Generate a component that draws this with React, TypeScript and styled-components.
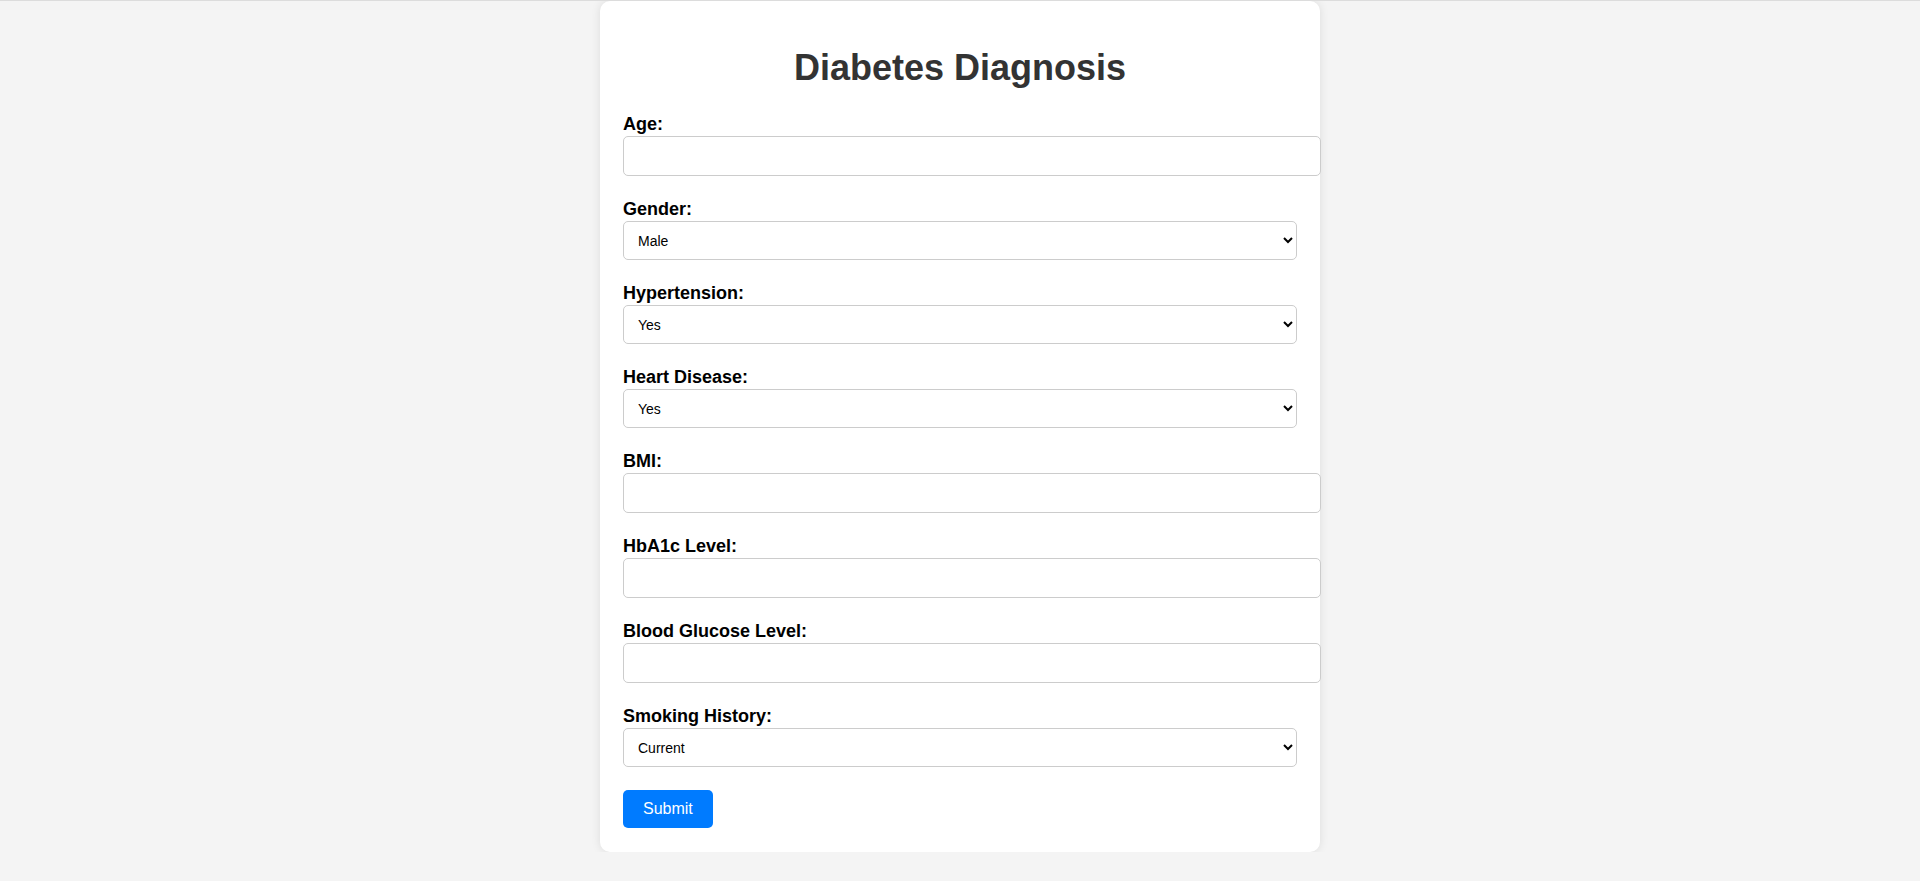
import styled, { createGlobalStyle } from 'styled-components';

const GlobalStyle = createGlobalStyle`
    body {
        margin: 0;
        background: #f4f4f4;
        border-top: 1px solid #dcdcdc;
        font-family: "Liberation Sans", Arial, sans-serif;
    }
`;

const Card = styled.div`
    width: 674px;
    margin: 0 auto;
    padding: 20px 23px 24px;
    background: #fff;
    border-radius: 10px;
    box-shadow: 0 0 10px rgba(0, 0, 0, 0.1);
`;

const Title = styled.h1`
    margin: 26px 0 25px;
    text-align: center;
    font-size: 36px;
    font-weight: 700;
    color: #333;
`;

const Field = styled.div`
    margin-bottom: 23px;
`;

const Label = styled.label`
    display: block;
    font-size: 18px;
    line-height: 20px;
    font-weight: 700;
    color: #000;
    margin-bottom: 2px;
`;

const TextInput = styled.input`
    display: block;
    box-sizing: content-box;
    width: 100%;
    height: 18px;
    padding: 10px 11px;
    border: 1px solid #ccc;
    border-radius: 5px;
    font-family: inherit;
    font-size: 16px;
    margin: 0;
`;

const Select = styled.select`
    display: block;
    box-sizing: border-box;
    width: 100%;
    height: 39px;
    padding: 0 10px;
    border: 1px solid #ccc;
    border-radius: 5px;
    background: #fff;
    color: #000;
    font-family: inherit;
    font-size: 14px;
    margin: 0;
`;

const SubmitButton = styled.button`
    display: block;
    padding: 10px 20px;
    border: none;
    border-radius: 5px;
    background: #007bff;
    color: #fff;
    font-family: inherit;
    font-size: 16px;
    line-height: 18px;
    cursor: pointer;
`;

type Option = { value: string; label: string };

const yesNo: Option[] = [
    { value: '1', label: 'Yes' },
    { value: '0', label: 'No' },
];

const selects: Record<string, Option[]> = {
    gender: [
        { value: 'male', label: 'Male' },
        { value: 'female', label: 'Female' },
    ],
    hypertension: yesNo,
    heart_disease: yesNo,
    smoking_history: [
        { value: 'current', label: 'Current' },
        { value: 'former', label: 'Former' },
        { value: 'never', label: 'Never' },
    ],
};

const fields: { id: string; label: string }[] = [
    { id: 'age', label: 'Age:' },
    { id: 'gender', label: 'Gender:' },
    { id: 'hypertension', label: 'Hypertension:' },
    { id: 'heart_disease', label: 'Heart Disease:' },
    { id: 'bmi', label: 'BMI:' },
    { id: 'hba1c', label: 'HbA1c Level:' },
    { id: 'glucose', label: 'Blood Glucose Level:' },
    { id: 'smoking_history', label: 'Smoking History:' },
];

const App: React.FC = () => {
    return (
        <>
            <GlobalStyle />
            <Card>
                <Title>Diabetes Diagnosis</Title>
                <form onSubmit={e => e.preventDefault()}>
                    {fields.map(f => (
                        <Field key={f.id}>
                            <Label htmlFor={f.id}>{f.label}</Label>
                            {selects[f.id] ? (
                                <Select id={f.id} defaultValue={selects[f.id][0].value}>
                                    {selects[f.id].map(o => (
                                        <option key={o.value} value={o.value}>{o.label}</option>
                                    ))}
                                </Select>
                            ) : (
                                <TextInput id={f.id} type='text' />
                            )}
                        </Field>
                    ))}
                    <SubmitButton type='submit'>Submit</SubmitButton>
                </form>
            </Card>
        </>
    );
};

export default App;
